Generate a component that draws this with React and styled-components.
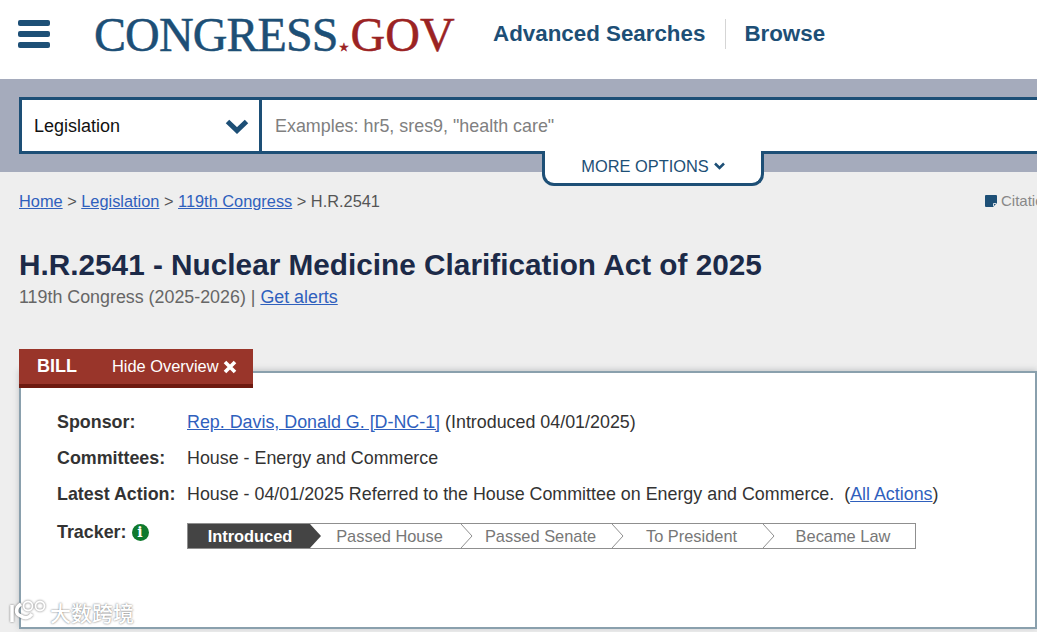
import styled, { createGlobalStyle } from 'styled-components'

const GlobalStyle = createGlobalStyle`
  html, body {
    margin: 0;
    height: 632px;
    overflow: hidden;
    background: #eeeeee;
    font-family: 'Liberation Sans', Arial, sans-serif;
  }
`

const navy = '#1d4f76'

const steps = ['Introduced', 'Passed House', 'Passed Senate', 'To President', 'Became Law']

export default function App() {
  return (
    <Page>
      <GlobalStyle />
      <Header>
        <Burger>
          <span />
          <span />
          <span />
        </Burger>
        <Logo>
          CONGRESS<Star>★</Star>
          <Gov>GOV</Gov>
        </Logo>
        <Nav>
          <NavLink>Advanced Searches</NavLink>
          <NavLink $divided>Browse</NavLink>
        </Nav>
      </Header>

      <SearchBand>
        <SearchBox>
          <Select>
            Legislation
            <svg width="24" height="16" viewBox="0 0 24 16">
              <path d="M2.500 3.500l9.500 9 9.500-9" fill="none" stroke={navy} strokeWidth="5" />
            </svg>
          </Select>
          <Placeholder>Examples: hr5, sres9, "health care"</Placeholder>
        </SearchBox>
        <MoreOptions>
          MORE OPTIONS
          <svg width="11" height="8" viewBox="0 0 11 8">
            <path d="M1 1.500l4.500 4.500L10 1.500" fill="none" stroke={navy} strokeWidth="2.500" />
          </svg>
        </MoreOptions>
      </SearchBand>

      <Content>
        <Crumbs>
          <a>Home</a> &gt; <a>Legislation</a> &gt; <a>119th Congress</a> &gt; H.R.2541
          <Citation>
            <svg width="12" height="12" viewBox="0 0 12 12">
              <path d="M0 1a1 1 0 0 1 1-1h10a1 1 0 0 1 1 1v7l-4 4H1a1 1 0 0 1-1-1z" fill={navy} />
              <path d="M8.500 11V8.500H11" fill="none" stroke="#fff" strokeWidth="0.800" />
            </svg>
            Citation
          </Citation>
        </Crumbs>
        <Title>H.R.2541 - Nuclear Medicine Clarification Act of 2025</Title>
        <Session>
          119th Congress (2025-2026) | <a>Get alerts</a>
        </Session>

        <Overview>
          <Tab>
            <TabName>BILL</TabName>
            <HideOverview>
              Hide Overview
              <svg width="14" height="14" viewBox="0 0 14 14">
                <path d="M2 2l10 10M12 2L2 12" stroke="#fff" strokeWidth="3.600" />
              </svg>
            </HideOverview>
          </Tab>
          <Panel>
            <Row>
              <Label>Sponsor:</Label>
              <Value>
                <a>Rep. Davis, Donald G. [D-NC-1]</a> (Introduced 04/01/2025)
              </Value>
            </Row>
            <Row>
              <Label>Committees:</Label>
              <Value>House - Energy and Commerce</Value>
            </Row>
            <Row>
              <Label>Latest Action:</Label>
              <Value>
                House - 04/01/2025 Referred to the House Committee on Energy and Commerce.&nbsp; (<a>All Actions</a>)
              </Value>
            </Row>
            <TrackerRow>
              <Label>
                Tracker:
                <InfoDot>i</InfoDot>
              </Label>
              <Tracker>
                {steps.map((step, i) => (
                  <Step key={step} $active={i === 0} $last={i === steps.length - 1}>
                    {step}
                    {i < steps.length - 1 && (
                      <StepArrow viewBox="0 0 12 24" $active={i === 0}>
                        <path d="M0 0l11 12L0 24" />
                      </StepArrow>
                    )}
                  </Step>
                ))}
              </Tracker>
            </TrackerRow>
          </Panel>
        </Overview>
      </Content>

      <Watermark>
        <svg width="40" height="26" viewBox="0 0 40 26">
          <path d="M4 6v17M13 5c-6 4-6 10 0 12 4 3 8 2 11-2" fill="none" stroke="#fff" strokeWidth="3.500" />
          <circle cx="20" cy="7" r="4.500" fill="none" stroke="#fff" strokeWidth="1.800" />
          <circle cx="32" cy="7" r="4.500" fill="none" stroke="#fff" strokeWidth="1.800" />
        </svg>
        大数跨境
      </Watermark>
    </Page>
  )
}

const Page = styled.div`
  position: relative;
  width: 1037px;
  height: 632px;
  overflow: hidden;
  background: #eeeeee;
  & a {
    color: #2f60bd;
    text-decoration: underline;
  }
`

const Header = styled.header`
  display: flex;
  align-items: center;
  height: 79px;
  padding: 0 0 11px 18px;
  box-sizing: border-box;
  background: #fff;
`

const Burger = styled.div`
  display: flex;
  flex-direction: column;
  gap: 5px;
  width: 32px;
  margin-right: 44px;
  & span {
    height: 6px;
    border-radius: 2px;
    background: ${navy};
  }
`

const Logo = styled.div`
  display: flex;
  align-items: baseline;
  width: 399px;
  font-family: 'Liberation Serif', 'Times New Roman', serif;
  font-size: 48px;
  letter-spacing: -0.9px;
  color: ${navy};
  -webkit-text-stroke: 0.5px currentColor;
`

const Star = styled.span`
  width: 13px;
  font-size: 11px;
  letter-spacing: 0;
  text-align: center;
  color: #9b2323;
`

const Gov = styled.span`
  letter-spacing: 0;
  color: #9b2323;
`

const Nav = styled.nav`
  display: flex;
  align-items: center;
`

const NavLink = styled.div`
  font-size: 22.35px;
  font-weight: 700;
  line-height: 30px;
  color: ${navy};
  ${(p) => p.$divided && 'margin-left: 20px; padding-left: 18px; border-left: 1px solid #d5d5d5;'}
`

const SearchBand = styled.div`
  position: relative;
  height: 93px;
  padding: 18px 0 0 19px;
  box-sizing: border-box;
  background: #a5abbc;
`

const SearchBox = styled.div`
  display: flex;
  height: 57px;
  width: 1040px;
  box-sizing: border-box;
  border: 3px solid ${navy};
  background: #fff;
`

const Select = styled.div`
  display: flex;
  align-items: center;
  justify-content: space-between;
  width: 240px;
  padding: 1px 10px 0 12px;
  box-sizing: border-box;
  border-right: 3px solid ${navy};
  font-size: 18px;
  color: #111;
`

const Placeholder = styled.div`
  display: flex;
  align-items: center;
  padding: 1px 0 0 13px;
  font-size: 17.9px;
  color: #808080;
`

const MoreOptions = styled.div`
  position: absolute;
  left: 542px;
  top: 72px;
  display: flex;
  align-items: center;
  justify-content: center;
  gap: 5px;
  width: 222px;
  height: 35px;
  padding-bottom: 2px;
  box-sizing: border-box;
  border: 3px solid ${navy};
  border-top: 0;
  border-radius: 0 0 12px 12px;
  background: #fff;
  font-size: 16.4px;
  color: ${navy};
`

const Content = styled.main`
  padding: 20px 0 0 19px;
`

const Crumbs = styled.div`
  position: relative;
  font-size: 16.35px;
  line-height: 18px;
  color: #555;
`

const Citation = styled.span`
  position: absolute;
  left: 966px;
  top: 0;
  display: flex;
  align-items: center;
  gap: 4px;
  font-size: 15px;
  color: #888;
`

const Title = styled.h1`
  margin: 37px 0 0;
  font-size: 29.75px;
  line-height: 36px;
  font-weight: 700;
  color: #1c2a48;
`

const Session = styled.div`
  margin-top: 4px;
  font-size: 17.85px;
  line-height: 20px;
  color: #666;
`

const Overview = styled.section`
  position: relative;
  margin-top: 42px;
  padding-top: 22px;
`

const Tab = styled.div`
  position: absolute;
  left: 0;
  top: 0;
  z-index: 1;
  display: flex;
  align-items: center;
  width: 234px;
  height: 39px;
  padding: 0 0 0 18px;
  box-sizing: border-box;
  border-bottom: 4px solid #6e1a10;
  background: #99352a;
  color: #fff;
`

const TabName = styled.span`
  width: 75px;
  font-size: 18px;
  font-weight: 700;
`

const HideOverview = styled.span`
  display: flex;
  align-items: center;
  gap: 4px;
  font-size: 16.4px;
`

const Panel = styled.div`
  width: 1018px;
  height: 258px;
  padding: 37px 0 0 36px;
  box-sizing: border-box;
  border: 2px solid #8aa0ad;
  background: #fff;
  box-shadow: 0 -1px 6px rgba(60, 70, 80, 0.25);
`

const Row = styled.div`
  display: flex;
  height: 36px;
  font-size: 17.88px;
  line-height: 24px;
  color: #333;
`

const TrackerRow = styled(Row)`
  margin-top: 2px;
`

const Label = styled.div`
  display: flex;
  align-items: center;
  gap: 5px;
  align-self: flex-start;
  width: 130px;
  font-weight: 700;
`

const InfoDot = styled.span`
  display: inline-flex;
  align-items: center;
  justify-content: center;
  width: 17px;
  height: 17px;
  border-radius: 50%;
  background: #0f7a2e;
  color: #fff;
  font-family: 'DejaVu Serif', serif;
  font-size: 14px;
  font-weight: 700;
`

const Value = styled.div`
  white-space: nowrap;
`

const Tracker = styled.div`
  display: flex;
  width: 729px;
  height: 26px;
  margin-top: 3px;
  box-sizing: border-box;
  border: 1px solid #8f8f8f;
  background: #fff;
`

const Step = styled.div`
  position: relative;
  flex: ${(p) => (p.$active ? '0 0 122px' : p.$last ? '1' : '0 0 151px')};
  display: flex;
  align-items: center;
  justify-content: center;
  padding: 0 0 1px ${(p) => (p.$active ? '2px' : '8px')};
  box-sizing: border-box;
  font-size: 16.4px;
  font-weight: ${(p) => (p.$active ? 700 : 400)};
  color: ${(p) => (p.$active ? '#fff' : '#777')};
  background: ${(p) => (p.$active ? '#444' : 'transparent')};
`

const StepArrow = styled.svg`
  position: absolute;
  z-index: 1;
  left: 100%;
  top: 0;
  width: 12px;
  height: 24px;
  & path {
    fill: ${(p) => (p.$active ? '#444' : '#fff')};
    stroke: ${(p) => (p.$active ? 'none' : '#8f8f8f')};
    stroke-width: 1;
  }
`

const Watermark = styled.div`
  position: absolute;
  left: 8px;
  top: 597px;
  display: flex;
  align-items: center;
  gap: 2px;
  font-family: 'Noto Sans CJK SC', sans-serif;
  font-size: 21px;
  font-weight: 500;
  line-height: 30px;
  color: #fff;
  text-shadow: 0 0 2px rgba(80, 80, 80, 0.9);
  & svg {
    filter: drop-shadow(0 0 1px rgba(80, 80, 80, 0.8));
  }
`
